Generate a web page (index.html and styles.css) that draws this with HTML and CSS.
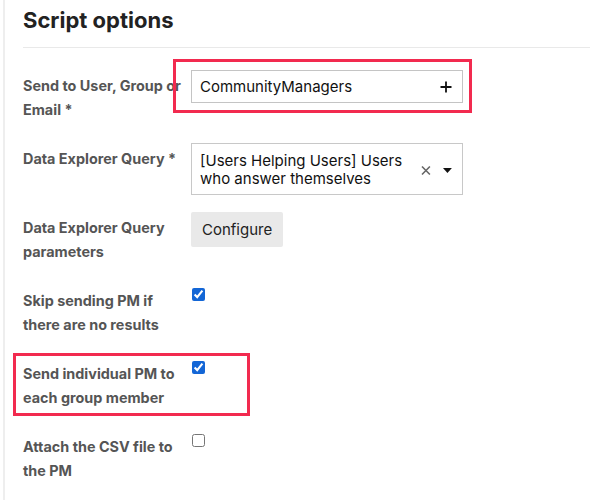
FILE: index.html
```html
<!DOCTYPE html>
<html lang="en">
  <head>
    <meta charset="UTF-8" />
    <meta name="viewport" content="width=device-width, initial-scale=1.0" />
    <title>Script options</title>
    <link rel="stylesheet" href="styles.css">
  </head>
  <body>
    <div class="panel">
      <h2 class="panel-title">Script options</h2>

      <div class="field">
        <label class="field-label">Send to User, Group or Email *</label>
        <div class="user-input marked">
          <span>CommunityManagers</span>
          <svg class="plus" width="12" height="12" viewBox="0 0 12 12">
            <path d="M6 0.5v11M0.5 6h11" stroke="#111" stroke-width="1.8" fill="none" />
          </svg>
        </div>
      </div>

      <div class="field">
        <label class="field-label">Data Explorer Query *</label>
        <div class="select-box">
          <span class="select-text">[Users Helping Users] Users who answer themselves</span>
          <svg class="clear" width="10" height="9" viewBox="0 0 10 9">
            <path d="M1 0.5l8 8M9 0.5l-8 8" stroke="#666" stroke-width="1.6" fill="none" />
          </svg>
          <svg class="caret" width="9" height="5" viewBox="0 0 9 5">
            <path d="M0 0h9L4.5 5z" fill="#111" />
          </svg>
        </div>
      </div>

      <div class="field">
        <label class="field-label">Data Explorer Query parameters</label>
        <button class="btn">Configure</button>
      </div>

      <div class="field">
        <label class="field-label">Skip sending PM if there are no results</label>
        <input class="check" type="checkbox" checked />
      </div>

      <div class="field marked-row">
        <label class="field-label">Send individual PM to each group member</label>
        <input class="check" type="checkbox" checked />
      </div>

      <div class="field">
        <label class="field-label">Attach the CSV file to the PM</label>
        <input class="check" type="checkbox" />
      </div>
    </div>
  </body>
</html>
```

FILE: styles.css
```css
* {
  box-sizing: border-box;
}
body {
  margin: 0;
  background: #fff;
  font-family: Inter, "Noto Sans", sans-serif;
  color: #222;
}
.panel {
  margin-left: 3px;
  min-height: 500px;
  border-left: 2px solid #eeeeee;
  padding: 6px 0 0 18px;
}
.panel-title {
  margin: 0;
  font-size: 22px;
  line-height: 28px;
  font-weight: 700;
  color: #222;
  padding-bottom: 13px;
  border-bottom: 1px solid #e9e9e9;
  margin-bottom: 26px;
}
.field {
  display: flex;
  align-items: flex-start;
  margin-bottom: 25px;
  position: relative;
}
.field-label {
  flex: 0 0 164px;
  margin-right: 4px;
  font-size: 14.4px;
  line-height: 24px;
  font-weight: 700;
  color: #555;
}
.user-input {
  position: relative;
  display: flex;
  align-items: center;
  justify-content: space-between;
  width: 272px;
  height: 33px;
  margin-top: -4px;
  padding: 0 10px 0 8px;
  border: 1px solid #c4c4c4;
  font-size: 15px;
  color: #111;
}
.marked::after {
  content: "";
  position: absolute;
  top: -12px;
  right: -10px;
  bottom: -11px;
  left: -19px;
  border: 3px solid #f22a4f;
}
.marked-row::after {
  content: "";
  position: absolute;
  top: -9px;
  bottom: -6px;
  left: -10px;
  width: 231px;
  border: 3px solid #f22a4f;
}
.select-box {
  display: flex;
  align-items: center;
  width: 272px;
  margin-top: -4px;
  margin-bottom: -4px;
  padding: 8px 10px 6px 8px;
  border: 1px solid #c8c8c8;
  font-size: 15px;
  line-height: 18px;
  color: #111;
}
.select-text {
  width: 212px;
}
.clear {
  margin-left: 12px;
}
.caret {
  margin-left: 12px;
}
.btn {
  margin-top: -4px;
  height: 35px;
  padding: 0 11px;
  border: none;
  border-radius: 2px;
  background: #e9e9e9;
  font-family: inherit;
  font-size: 15px;
  color: #222;
}
.check {
  width: 13px;
  height: 13px;
  margin: -1px 0 0 1px;
  accent-color: #1366d6;
}
```
